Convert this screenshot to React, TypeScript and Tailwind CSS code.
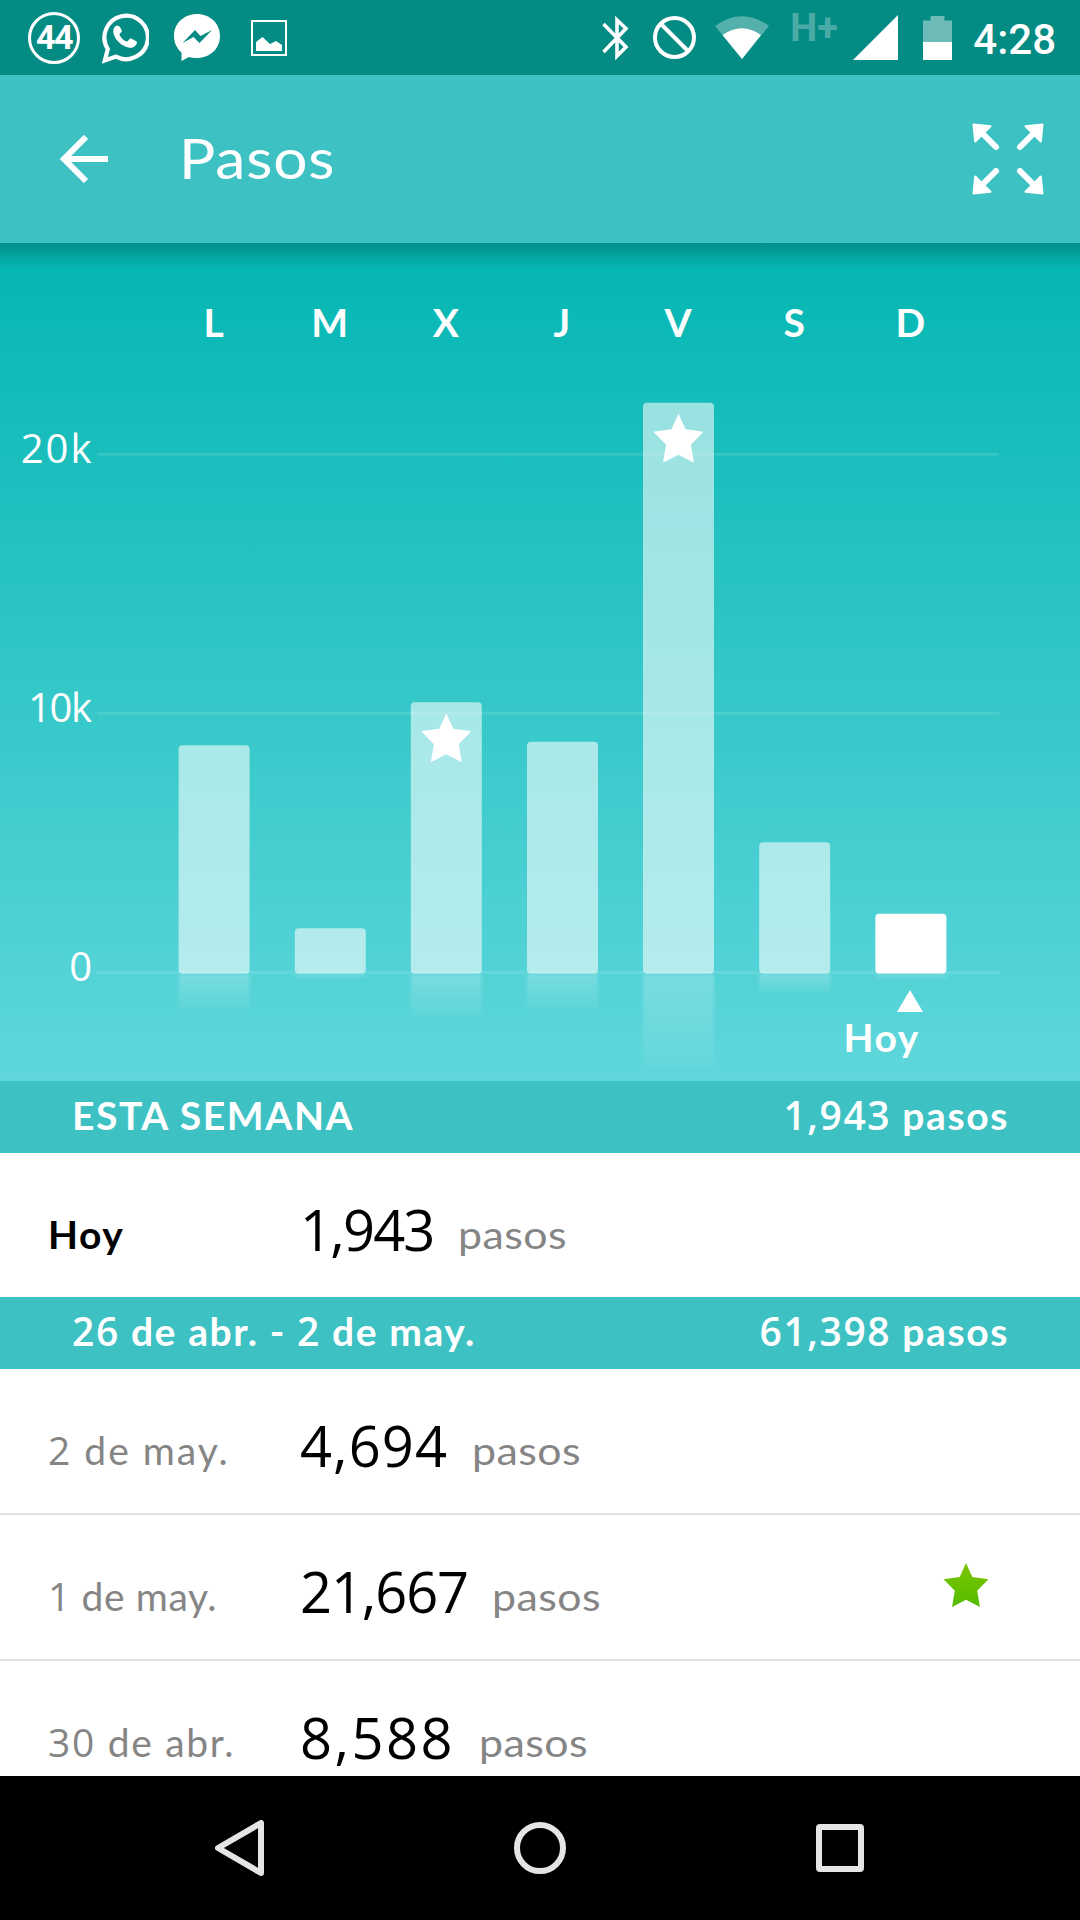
import React from 'react';

interface DayBar {
  day: string;
  x: number;
  top: number;
  reflection: number;
  starred?: boolean;
  today?: boolean;
}

interface StepRow {
  label: string;
  steps: string;
  today?: boolean;
  starred?: boolean;
  labelClass: string;
  stepsClass: string;
}

const BASELINE = 730;
const BAR_WIDTH = 71;

const bars: DayBar[] = [
  { day: 'L', x: 178.6, top: 502.2, reflection: 34 },
  { day: 'M', x: 294.8, top: 685.3, reflection: 4 },
  { day: 'X', x: 410.8, top: 459.3, reflection: 41, starred: true },
  { day: 'J', x: 527, top: 498.7, reflection: 34 },
  { day: 'V', x: 643, top: 159.7, reflection: 93, starred: true },
  { day: 'S', x: 759.2, top: 599.3, reflection: 18 },
  { day: 'D', x: 875.4, top: 670.7, reflection: 5, today: true }
];

const gridLines = [
  { label: '20k', y: 211.3, labelX: 93.5, labelClass: 'tracking-[2px]' },
  { label: '10k', y: 470.3, labelX: 90.5, labelClass: 'tracking-[-1.5px]' },
  { label: '0', y: 729.5, labelX: 92, labelClass: '' }
];

const thisWeek: StepRow[] = [
  { label: 'Hoy', steps: '1,943', today: true, labelClass: 'tracking-[1.5px]', stepsClass: 'tracking-[-1.8px]' }
];

const lastWeek: StepRow[] = [
  { label: '2 de may.', steps: '4,694', labelClass: 'tracking-[2px]', stepsClass: 'tracking-[1.1px]' },
  { label: '1 de may.', steps: '21,667', starred: true, labelClass: 'tracking-[0.6px]', stepsClass: 'tracking-[-1.1px]' },
  { label: '30 de abr.', steps: '8,588', labelClass: 'tracking-[1.7px]', stepsClass: 'tracking-[2.5px]' }
];

const STAR_PATH =
  'M25 0 L32 15.5 L50 18 L37.5 31 L40.5 49 L25 41 L9.5 49 L12.5 31 L0 18 L18 15.5 Z';

// Digits are set in Open Sans, words in Lato
const MixedText: React.FC<{ text: string; digitClass?: string }> = ({ text, digitClass = '' }) => (
  <>
    {text.split(/(\d[\d,]*)/).map((part, i) =>
      /^\d/.test(part) ? (
        <span key={i} className={`font-['Open_Sans'] ${digitClass}`}>
          {part}
        </span>
      ) : (
        part
      )
    )}
  </>
);

const StatusBar: React.FC = () => (
  <div className="h-[75px] bg-[#048b84] flex items-center justify-between pl-7 pr-6 text-white">
    <div className="flex items-center h-full">
      <div className="w-[52px] h-[52px] rounded-full border-[3px] border-white flex items-center justify-center font-['Roboto'] font-bold text-[34px] tracking-[-1.5px]">
        44
      </div>
      <svg className="w-[48px] h-[52px] ml-[21px]" viewBox="0 0 48 52" fill="none">
        <path d="M3.800 48.500 L6.800 37 A21.700 21.700 0 1 1 15 44.600 Z" stroke="white" strokeWidth="4.200" />
        <path
          fill="white"
          d="M16 13.500 c-3 1-4 4-3.600 7 c1 7 8 13.500 15 15 c4 1 8-1 8.600-5 c0-1.500-6-4.500-7-4 c-1.500 1-2 3-3.500 3 c-3-1-6-4-7-7 c0-1.500 2.500-2 2.300-3.500 c-.3-1.500-1.800-5.500-4.800-5.500z"
        />
      </svg>
      <svg className="w-[46px] h-[48px] ml-[25px]" viewBox="0 0 46 48">
        <path fill="white" d="M23 0 C10 0 0 9.500 0 22 C0 29 3 34.500 7.500 38.500 V47 L15 43 C17.500 43.700 20 44 23 44 C36 44 46 34.500 46 22 C46 9.500 36 0 23 0Z" />
        <path fill="#048b84" d="M8.500 29 L21 16 L26.500 22 L38 16 L25.500 29 L19.500 23 Z" />
      </svg>
      <svg className="w-9 h-9 ml-[31px]" viewBox="0 0 36 36">
        <rect x="1" y="1" width="34" height="34" fill="none" stroke="white" strokeWidth="2" />
        <path fill="white" d="M5 31 V22 L11.500 17 L19 24 L25 21 L31 25 V31 Z" />
      </svg>
    </div>

    <div className="flex items-center h-full">
      <svg className="w-[27px] h-[44px]" viewBox="0 0 27 44" fill="none" stroke="white" strokeWidth="3.600">
        <path d="M1.500 8 L24 31 L15 40 V4 L24 12.500 L1.500 36" />
      </svg>
      <svg className="w-[43px] h-[43px] ml-6" viewBox="0 0 43 43" fill="none" stroke="white" strokeWidth="4">
        <circle cx="21.500" cy="21.500" r="19.500" />
        <path d="M8 8 L35 35" />
      </svg>
      <svg className="w-[54px] h-[44px] ml-[19px]" viewBox="0 0 54 44">
        <path fill="white" fillOpacity=".32" d="M0 10 Q27 -9.500 54 10 L27 43 Z" />
        <path fill="white" d="M7.500 19 Q27 5.500 46 19 L27 43 Z" />
      </svg>
      <span className="ml-[21px] w-[50px] h-full pt-[7px] font-['Roboto'] font-bold text-[38px] leading-[42px] text-white/30">
        H+
      </span>
      <svg className="w-[45px] h-[45px] ml-[13px]" viewBox="0 0 45 45">
        <path fill="white" d="M0 45 L45 0 V45 Z" />
      </svg>
      <svg className="w-[29px] h-[44px] ml-[25px]" viewBox="0 0 29 44">
        <path fill="white" fillOpacity=".42" d="M0 4.500 H7.500 V0 H21.500 V4.500 H29 V26 H0 Z" />
        <rect y="26" width="29" height="18" fill="white" />
      </svg>
      <span className="ml-[21px] mt-1 font-['Roboto'] font-medium text-[42px]">4:28</span>
    </div>
  </div>
);

const AppBar: React.FC = () => (
  <header className="h-[168px] bg-[#3ec1c3] flex items-center pl-[60px] pr-9 text-white">
    <svg className="w-[48px] h-[48px]" viewBox="0 0 48 48" fill="none" stroke="white" strokeWidth="6">
      <path d="M26 2 L4 24 L26 46 M4 24 H48" />
    </svg>
    <h1 className="ml-[71px] pb-[3px] text-[56px] tracking-[0.8px] origin-left scale-x-[1.08]">Pasos</h1>
    <svg className="w-[72px] h-[72px] ml-auto" viewBox="0 0 72 72">
      {[0, 90, 180, 270].map((angle) => (
        <g key={angle} transform={`rotate(${angle} 36 36)`}>
          <path d="M10 10 L24 24" stroke="white" strokeWidth="6" strokeLinecap="round" />
          <path
            d="M1.500 1.500 L18.500 3.200 L3.200 18.500 Z"
            fill="white"
            stroke="white"
            strokeWidth="2"
            strokeLinejoin="round"
          />
        </g>
      ))}
    </svg>
  </header>
);

const StepsChart: React.FC = () => (
  <section className="h-[838px] bg-linear-to-b/srgb from-[#03b6b2] to-[#5fd7dc]">
    <svg className="block w-full h-full" viewBox="0 0 1080 838" fill="white">
      <defs>
        <linearGradient id="reflection" x1="0" y1="0" x2="0" y2="1">
          <stop offset="0" stopColor="white" stopOpacity=".22" />
          <stop offset="1" stopColor="white" stopOpacity=".04" />
        </linearGradient>
        <linearGradient id="shadow" x1="0" y1="0" x2="0" y2="1">
          <stop offset="0" stopColor="black" stopOpacity=".22" />
          <stop offset=".5" stopColor="black" stopOpacity=".1" />
          <stop offset="1" stopColor="black" stopOpacity="0" />
        </linearGradient>
        <filter id="soft" x="-10%" y="-20%" width="120%" height="140%">
          <feGaussianBlur stdDeviation="1.500" />
        </filter>
      </defs>

      <rect width="1080" height="27" fill="url(#shadow)" />

      {gridLines.map((line) => (
        <g key={line.label}>
          <rect x="97" y={line.y - 1.5} width="902" height="3" fillOpacity=".11" />
          <text
            x={line.labelX}
            y={line.y + 8.9}
            textAnchor="end"
            fontSize="40"
            className={`font-['Open_Sans'] ${line.labelClass}`}
          >
            {line.label}
          </text>
        </g>
      ))}

      {bars.map((bar) => (
        <g key={bar.day}>
          <text x={bar.x + BAR_WIDTH / 2 - 0.5} y="94" textAnchor="middle" fontSize="39" fontWeight="700">
            {bar.day}
          </text>
          <rect
            x={bar.x}
            y={bar.top}
            width={BAR_WIDTH}
            height={BASELINE - bar.top + 0.5}
            rx="4"
            fillOpacity={bar.today ? 1 : 0.57}
          />
          <rect
            x={bar.x}
            y={BASELINE + 1}
            width={BAR_WIDTH}
            height={bar.reflection}
            fill="url(#reflection)"
            filter="url(#soft)"
          />
          {bar.starred && (
            <path d={STAR_PATH} transform={`translate(${bar.x + 10.5} ${bar.top + 11})`} />
          )}
        </g>
      ))}

      {/* Marker under the current day */}
      <path d="M910 747 L923 769 H897 Z" />
      <text x="843.500" y="809" fontSize="39" fontWeight="700" className="tracking-[1.5px]">
        Hoy
      </text>
    </svg>
  </section>
);

const WeekHeader: React.FC<{ title: string; total: string }> = ({ title, total }) => (
  <div className="h-[72px] bg-[#3ec1c3] flex items-center justify-between pl-[72px] pr-[71px] pb-[3px] text-white font-bold text-[39px] tracking-[1.6px]">
    <span>
      <MixedText text={title} digitClass="font-semibold" />
    </span>
    <span>
      <MixedText text={total} digitClass="font-semibold" />
    </span>
  </div>
);

const DayRow: React.FC<{ row: StepRow }> = ({ row }) => (
  <div className="h-[146px] flex items-baseline pt-[46px] pl-12 pr-[91px] border-b-2 border-[#e0e0e0]">
    <span
      className={`w-[252px] -translate-y-0.5 text-[39px] ${row.today ? 'font-bold text-black' : 'text-[#858585]'} ${row.labelClass}`}
    >
      <MixedText text={row.label} />
    </span>
    <span className={`font-['Open_Sans'] text-[56px] leading-[60px] text-black ${row.stepsClass}`}>{row.steps}</span>
    <span className="ml-[24px] -translate-y-0.5 origin-left scale-x-[1.1] text-[39px] tracking-[0.4px] text-[#858585]">
      pasos
    </span>
    {row.starred && (
      <svg className="w-[46px] h-[44px] ml-auto -translate-y-[6px]" viewBox="0 0 50 49">
        <defs>
          <linearGradient id="goal" x1="0" y1="0" x2="0" y2="1">
            <stop offset="0" stopColor="#7cc400" />
            <stop offset="1" stopColor="#54bd00" />
          </linearGradient>
        </defs>
        <path d={STAR_PATH} fill="url(#goal)" />
      </svg>
    )}
  </div>
);

const NavBar: React.FC = () => (
  <nav className="h-[144px] shrink-0 bg-black flex items-center justify-between pl-[215px] pr-[216px]">
    <svg className="w-[49px] h-[56px]" viewBox="0 0 49 56" fill="none" stroke="#e5e5e5" strokeWidth="6">
      <path d="M46 3 V53 L3 28 Z" strokeLinejoin="round" />
    </svg>
    <div className="w-[52px] h-[52px] rounded-full border-[6px] border-[#e5e5e5]" />
    <div className="w-12 h-12 rounded-[4px] border-[6px] border-[#e5e5e5]" />
  </nav>
);

export default function App() {
  return (
    <div className="w-[1080px] h-[1920px] bg-white flex flex-col overflow-hidden font-['Lato',sans-serif]">
      <StatusBar />
      <AppBar />
      <StepsChart />
      <main className="flex-1 min-h-0 overflow-hidden">
        <WeekHeader title="ESTA SEMANA" total="1,943 pasos" />
        <div className="h-[144px] overflow-hidden">
          {thisWeek.map((row) => (
            <DayRow key={row.label} row={row} />
          ))}
        </div>
        <WeekHeader title="26 de abr. - 2 de may." total="61,398 pasos" />
        {lastWeek.map((row) => (
          <DayRow key={row.label} row={row} />
        ))}
      </main>
      <NavBar />
    </div>
  );
}
